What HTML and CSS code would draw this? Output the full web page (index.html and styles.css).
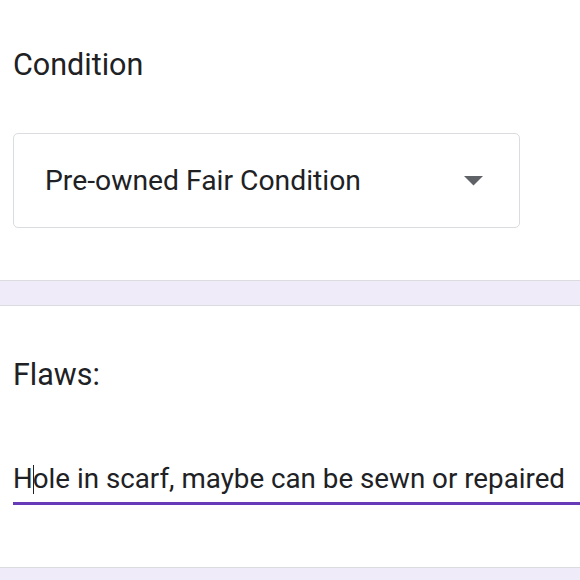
FILE: index.html
```html
<!DOCTYPE html>
<html>
<head>
<meta charset="utf-8">
<link rel="stylesheet" href="styles.css">
</head>
<body>
<div class="page">
  <section class="card card-first">
    <div class="title">Condition</div>
    <div class="select">
      <span class="select-text">Pre-owned Fair Condition</span>
      <svg class="arrow" width="19" height="10" viewBox="0 0 19 10"><path d="M0 0 L19 0 L9.5 9.5 Z" fill="#5f6368"/></svg>
    </div>
  </section>
  <section class="card card-second">
    <div class="title">Flaws:</div>
    <div class="input">
      <span class="input-text">H<span class="caret"></span>ole in scarf, maybe can be sewn or repaired</span>
    </div>
  </section>
</div>
</body>
</html>
```
FILE: styles.css
```css
html, body {
  margin: 0;
  padding: 0;
}
body {
  background: #f0ebf8;
  font-family: Roboto, "Noto Sans", sans-serif;
  color: #202124;
  overflow: hidden;
}
.page {
  display: flex;
  flex-direction: column;
  gap: 24px;
}
.card {
  background: #fff;
  border-top: 1px solid #dadce0;
  border-bottom: 1px solid #dadce0;
  padding-left: 13px;
}
.card-first {
  border-top: none;
  height: 281px;
  box-sizing: border-box;
  padding-top: 45px;
}
.card-second {
  height: 263px;
  box-sizing: border-box;
  padding-top: 49px;
}
.title {
  font-size: 30.5px;
  line-height: 40px;
}
.select {
  margin-top: 48px;
  width: 507px;
  height: 95px;
  box-sizing: border-box;
  border: 1px solid #dadce0;
  border-radius: 5px;
  display: flex;
  align-items: center;
  justify-content: space-between;
  padding-left: 31px;
  padding-right: 36px;
}
.select-text {
  font-size: 28.3px;
}
.arrow {
  display: block;
}
.input {
  margin-top: 67px;
  font-size: 27.75px;
  line-height: 33px;
  border-bottom: 3px solid #673ab7;
  padding-bottom: 7px;
  margin-right: -20px;
}
.input-text {
  white-space: nowrap;
}
.caret {
  display: inline-block;
  width: 1px;
  height: 29px;
  background: #202124;
  vertical-align: -6px;
  margin-right: -1px;
}
```
